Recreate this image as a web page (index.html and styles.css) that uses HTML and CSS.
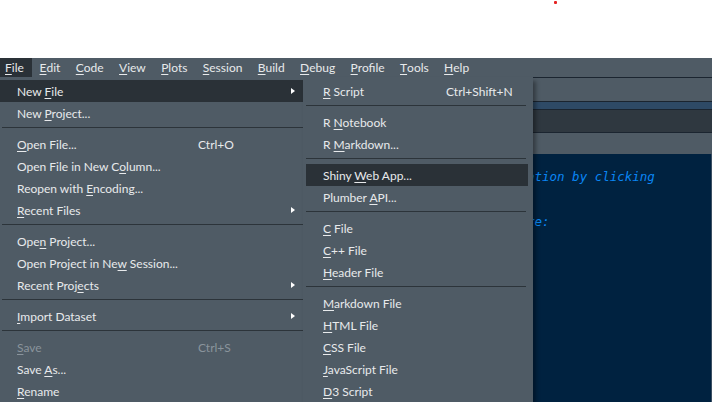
FILE: index.html
```html
<!DOCTYPE html>
<html>
<head>
<meta charset="utf-8">
<link rel="stylesheet" href="styles.css">
</head>
<body>
<div class="top"><span class="dot"></span></div>
<div class="app">
  <div class="menubar">
    <span class="mi active"><u>F</u>ile</span>
    <span class="mi"><u>E</u>dit</span>
    <span class="mi"><u>C</u>ode</span>
    <span class="mi"><u>V</u>iew</span>
    <span class="mi"><u>P</u>lots</span>
    <span class="mi"><u>S</u>ession</span>
    <span class="mi"><u>B</u>uild</span>
    <span class="mi"><u>D</u>ebug</span>
    <span class="mi"><u>P</u>rofile</span>
    <span class="mi"><u>T</u>ools</span>
    <span class="mi"><u>H</u>elp</span>
  </div>
  <div class="toolbar"></div>
  <div class="band"></div>
  <div class="tabs"></div>
  <div class="edtools"></div>
  <div class="editor">
    <div class="line">#</div>
    <div class="line"># This is a Shiny web application. You can run the application by clicking</div>
    <div class="line"># the 'Run App' button above.</div>
    <div class="line">#</div>
    <div class="line"># Find out more about building applications with Shiny here:</div>
    <div class="line">#</div>
    <div class="line">#    http://shiny.rstudio.com/</div>
    <div class="line">#</div>
  </div>

  <div class="menu filemenu">
    <div class="row hl"><span class="lbl">New <u>F</u>ile</span><span class="arr"></span></div>
    <div class="row"><span class="lbl">New <u>P</u>roject...</span></div>
    <div class="sep"></div>
    <div class="row"><span class="lbl"><u>O</u>pen File...</span><span class="sc">Ctrl+O</span></div>
    <div class="row"><span class="lbl">Open File in New C<u>o</u>lumn...</span></div>
    <div class="row"><span class="lbl">Reopen with <u>E</u>ncoding...</span></div>
    <div class="row"><span class="lbl"><u>R</u>ecent Files</span><span class="arr"></span></div>
    <div class="sep"></div>
    <div class="row"><span class="lbl">Ope<u>n</u> Project...</span></div>
    <div class="row"><span class="lbl">Open Project in Ne<u>w</u> Session...</span></div>
    <div class="row"><span class="lbl">Recent Proj<u>e</u>cts</span><span class="arr"></span></div>
    <div class="sep"></div>
    <div class="row"><span class="lbl"><u>I</u>mport Dataset</span><span class="arr"></span></div>
    <div class="sep"></div>
    <div class="row dis"><span class="lbl"><u>S</u>ave</span><span class="sc">Ctrl+S</span></div>
    <div class="row"><span class="lbl">Save <u>A</u>s...</span></div>
    <div class="row"><span class="lbl"><u>R</u>ename</span></div>
  </div>

  <div class="menu submenu">
    <div class="row"><span class="lbl"><u>R</u> Script</span><span class="sc">Ctrl+Shift+N</span></div>
    <div class="sep"></div>
    <div class="row"><span class="lbl">R <u>N</u>otebook</span></div>
    <div class="row"><span class="lbl">R <u>M</u>arkdown...</span></div>
    <div class="sep"></div>
    <div class="row hl"><span class="lbl">Shiny <u>W</u>eb App...</span></div>
    <div class="row"><span class="lbl">Plumber <u>A</u>PI...</span></div>
    <div class="sep"></div>
    <div class="row"><span class="lbl"><u>C</u> File</span></div>
    <div class="row"><span class="lbl"><u>C</u>++ File</span></div>
    <div class="row"><span class="lbl"><u>H</u>eader File</span></div>
    <div class="sep"></div>
    <div class="row"><span class="lbl"><u>M</u>arkdown File</span></div>
    <div class="row"><span class="lbl"><u>H</u>TML File</span></div>
    <div class="row"><span class="lbl"><u>C</u>SS File</span></div>
    <div class="row"><span class="lbl"><u>J</u>avaScript File</span></div>
    <div class="row"><span class="lbl"><u>D</u>3 Script</span></div>
  </div>
</div>
</body>
</html>
```

FILE: styles.css
```css
html, body {
  margin: 0;
  padding: 0;
  background: #ffffff;
  overflow: hidden;
}
body {
  width: 712px;
  height: 402px;
  font-family: Lato, "Noto Sans", sans-serif;
  font-size: 12px;
  color: #e8eaec;
}
.top {
  height: 58px;
  position: relative;
  background: #ffffff;
}
.dot {
  position: absolute;
  left: 554px;
  top: 1px;
  width: 3px;
  height: 3px;
  background: #e52222;
  border-radius: 1px;
}
.app {
  position: relative;
  height: 344px;
  display: flex;
  flex-direction: column;
  background: #4f5b65;
}
.menubar {
  height: 19px;
  display: flex;
  align-items: stretch;
  background: #4f5b65;
  flex: 0 0 auto;
}
.mi {
  display: flex;
  align-items: center;
  padding: 0 7.7px;
  white-space: nowrap;
}
.mi:first-child {
  padding-left: 5px;
  padding-right: 8px;
}
.mi.active {
  background: #2a3137;
}
u {
  text-decoration: underline;
  text-decoration-thickness: 1px;
  text-underline-offset: 2px;
}
.toolbar {
  flex: 0 0 auto;
  height: 23px;
  border-top: 1px solid #1b2530;
  border-bottom: 1px solid #1b2530;
  background: #4f5b65;
}
.band {
  flex: 0 0 auto;
  height: 7px;
  border-bottom: 1px solid #1b2530;
  background: #2e4a66;
}
.tabs {
  flex: 0 0 auto;
  height: 22px;
  border-bottom: 1px solid #1b2530;
  background: #2f3840;
}
.edtools {
  flex: 0 0 auto;
  height: 21px;
  background: #4f5b65;
}
.editor {
  flex: 1 1 auto;
  background: #002240;
  border-right: 1px solid #3a4e62;
  overflow: hidden;
  padding-left: 98px;
  font-family: "DejaVu Sans Mono", monospace;
  font-style: italic;
  font-size: 12.5px;
  line-height: 15px;
  color: #0a86f4;
}
.line {
  white-space: pre;
  height: 15px;
}
.menu {
  position: absolute;
  top: 19px;
  background: #4f5b65;
  padding-top: 3px;
  box-sizing: border-box;
}
.filemenu {
  left: 0;
  width: 303px;
  height: 330px;
}
.submenu {
  left: 303px;
  width: 230px;
  height: 330px;
  padding-left: 3px;
  padding-right: 5px;
  box-shadow: 3px 4px 4px rgba(0, 0, 0, 0.35);
}
.row {
  height: 22px;
  display: flex;
  align-items: center;
  padding-left: 17px;
  white-space: nowrap;
}
.row.hl {
  background: #2a3137;
}
.row.dis {
  color: #8a949c;
}
.filemenu .lbl {
  flex: 0 0 181px;
}
.submenu .lbl {
  flex: 0 0 123px;
}
.arr {
  margin-left: auto;
  margin-right: 8px;
  width: 0;
  height: 0;
  border-left: 4px solid #ffffff;
  border-top: 3.5px solid transparent;
  border-bottom: 3.5px solid transparent;
}
.sep {
  height: 1px;
  background: #2c343a;
  margin: 3px 0 5px 2px;
}
.submenu .sep {
  margin: 3px 2px 5px 0;
}
```
